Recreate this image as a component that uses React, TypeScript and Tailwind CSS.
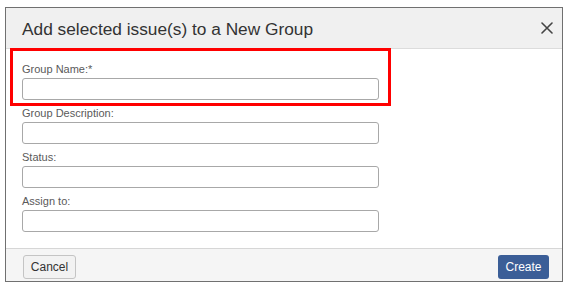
import React from "react";

const fields = ["Group Name:*", "Group Description:", "Status:", "Assign to:"];

export default function App() {
  return (
    <div className="w-[567px] h-[287px] bg-white relative" style={{ fontFamily: '"Liberation Sans", Arial, sans-serif' }}>
      <div className="absolute left-[5px] top-[7px] w-[558px] h-[275px] border border-[#707070] flex flex-col bg-white">
        <div className="h-[41px] bg-[#f0f0f0] border-b border-[#dcdcdc] flex items-center justify-between pl-[16px] pr-[8px]">
          <span className="text-[17.3px] text-[#333333] leading-none pt-[3px]">Add selected issue(s) to a New Group</span>
          <svg width="12" height="12" viewBox="0 0 12 12" className="mr-[1px]">
            <path d="M1 1 L11 11 M11 1 L1 11" stroke="#444" strokeWidth="1.6" strokeLinecap="round" />
          </svg>
        </div>
        <div className="flex-1 pl-[16px] pt-[13px]">
          {fields.map((f) => (
            <div key={f} className="mb-[6px]">
              <div className="text-[11px] leading-[14px] text-[#5a5a5a] mb-[2px]">{f}</div>
              <div className="w-[357px] h-[22px] border border-[#a8a8a8] rounded-[3px] bg-white" />
            </div>
          ))}
        </div>
        <div className="h-[33px] bg-[#f5f5f5] border-t border-[#d6d6d6] flex items-start justify-between pl-[17px] pr-[13px] pt-[6px]">
          <button className="w-[53px] h-[24px] bg-[#f2f2f2] border border-[#c4c4c4] rounded-[3px] text-[12px] text-[#333333]">Cancel</button>
          <button className="w-[51px] h-[24px] bg-[#3b5e97] rounded-[3px] text-[12px] text-white">Create</button>
        </div>
      </div>
      <div className="absolute left-[10px] top-[48px] w-[381px] h-[58px] border-[3px] border-[#ff0000] pointer-events-none" />
    </div>
  );
}
